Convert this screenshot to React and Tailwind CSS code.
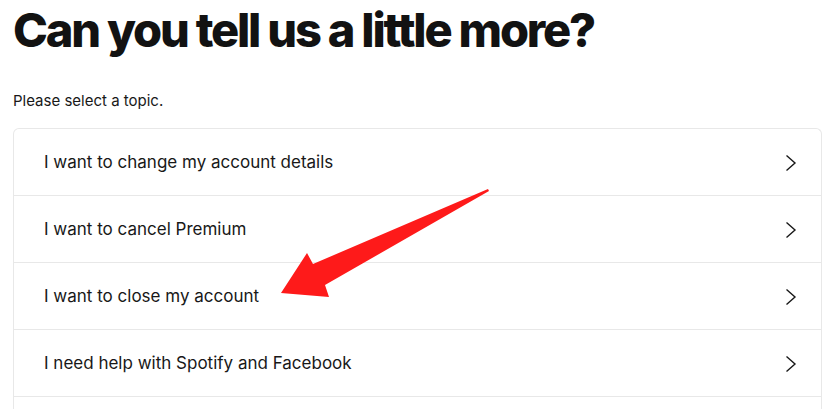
import React from 'react';

const topics = [
  'I want to change my account details',
  'I want to cancel Premium',
  'I want to close my account',
  'I need help with Spotify and Facebook',
];

const Chevron = () => (
  <svg width="12" height="18" viewBox="0 0 12 18" fill="none" className="shrink-0">
    <path d="M1.5 1.5 L10 9 L1.5 16.5" stroke="#181818" strokeWidth="1.4" />
  </svg>
);

export default function App() {
  return (
    <div className="relative w-[832px] h-[409px] overflow-hidden bg-white text-[#121212] font-['Inter',sans-serif]">
      <h1 className="pl-[13px] pt-[2px] text-[47px] font-extrabold tracking-[-2.2px] leading-[56px]">
        Can you tell us a little more?
      </h1>
      <p className="pl-[13px] mt-[33px] text-[15px] leading-[20px] text-[#181818]">Please select a topic.</p>

      <div className="ml-[13px] mt-[17px] w-[809px] border border-b-0 border-[#e8e8e8] rounded-t-[6px]">
        {topics.map((t) => (
          <div
            key={t}
            className="flex items-center justify-between h-[67px] pl-[30px] pr-[24px] pt-[2px] border-b border-[#e8e8e8]"
          >
            <span className="text-[17px] text-[#181818]">{t}</span>
            <Chevron />
          </div>
        ))}
        <div className="h-[20px]" />
      </div>

      {/* red annotation arrow */}
      <svg className="absolute left-0 top-0" width="832" height="409" viewBox="0 0 832 409">
        <polygon
          points="488,189 489,191 325,285 329,297 281,293 307,253 313,264"
          fill="#fe1a1a"
        />
      </svg>
    </div>
  );
}
